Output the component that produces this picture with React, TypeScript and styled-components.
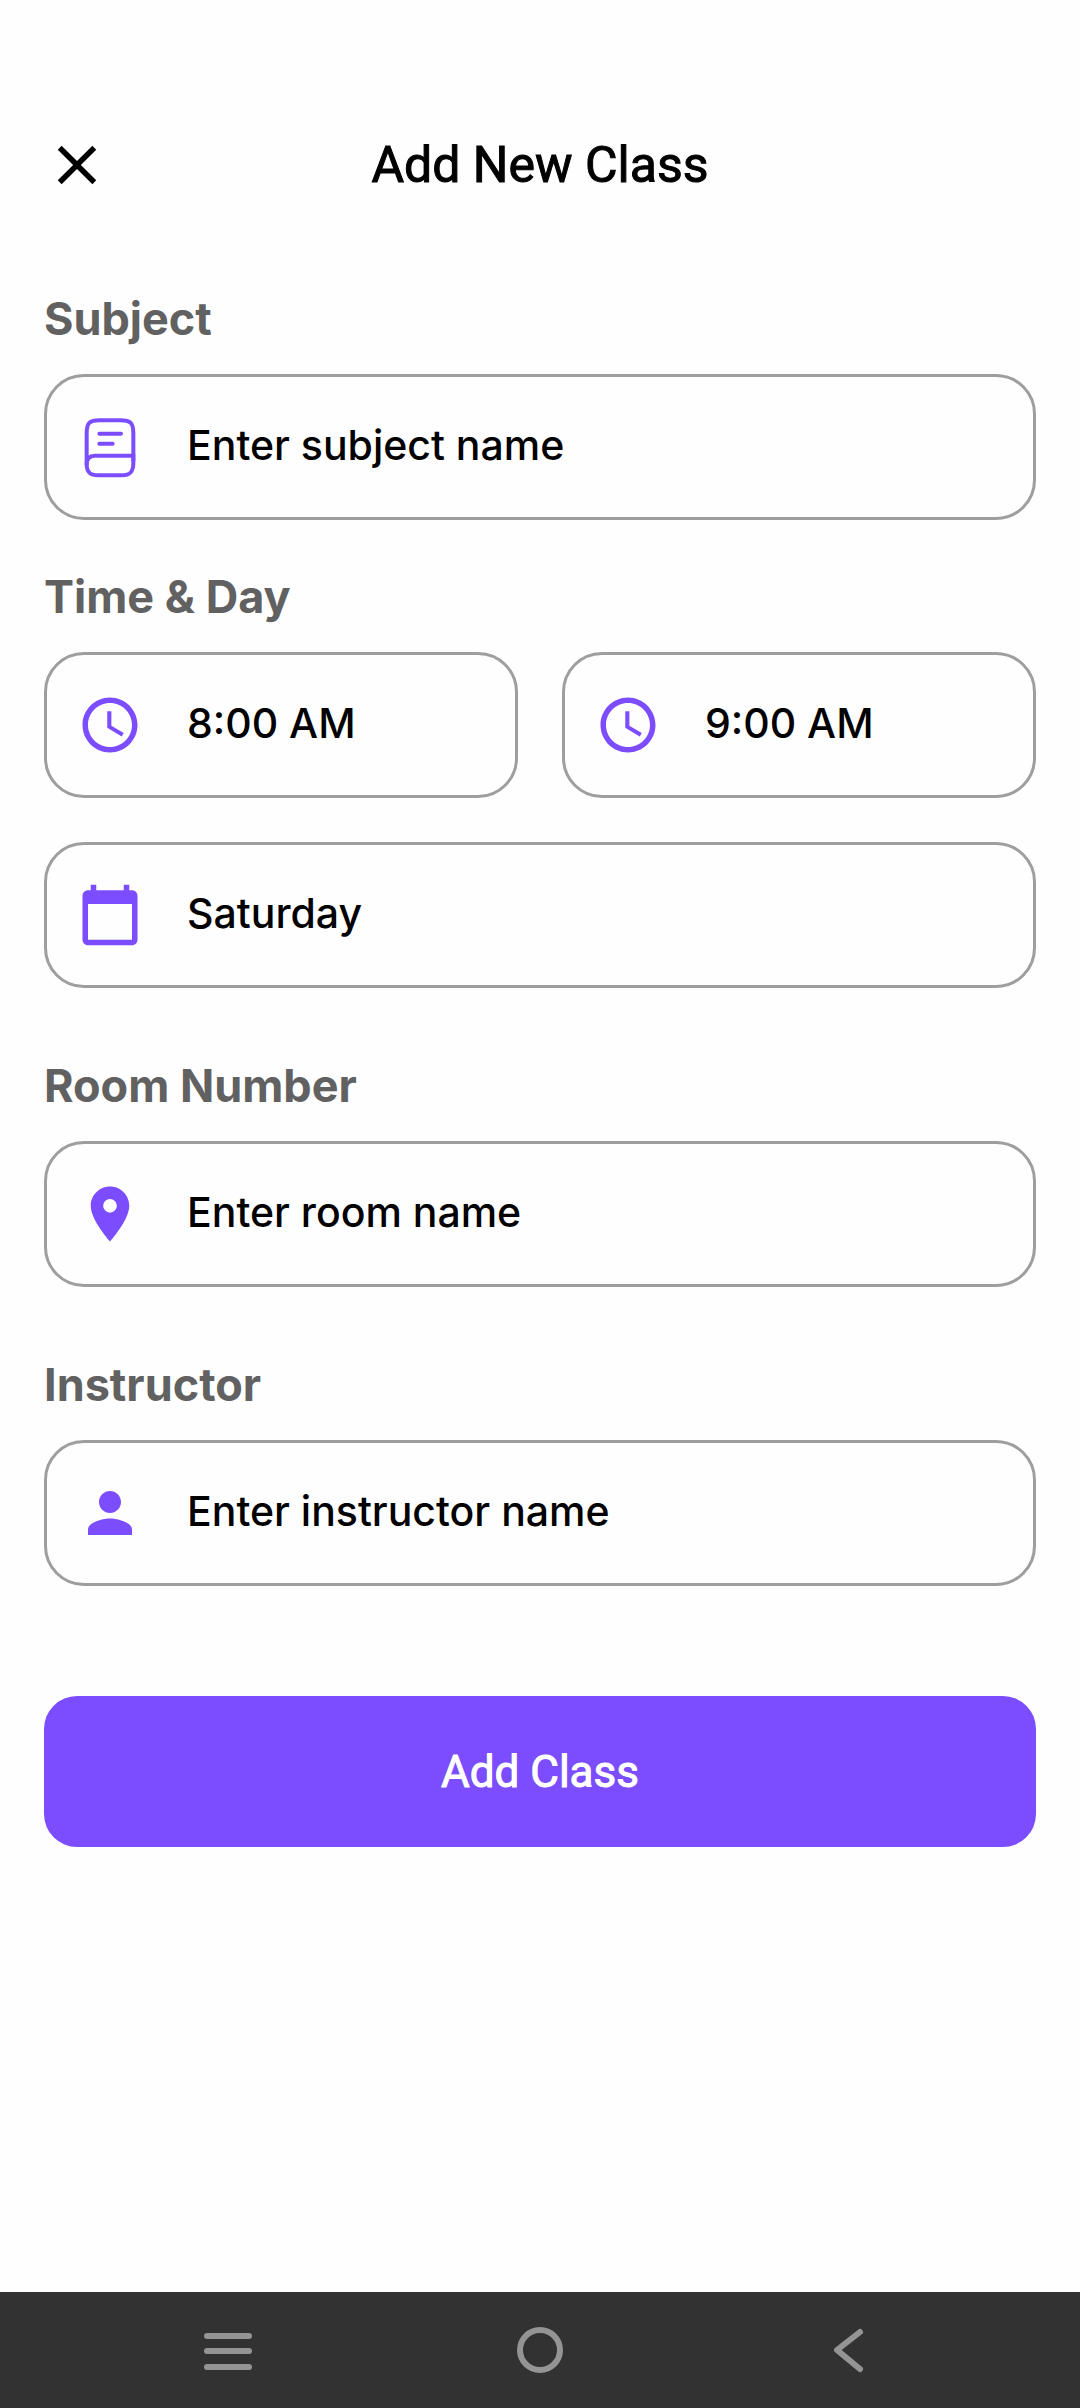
import React from "react";
import styled, { createGlobalStyle } from "styled-components";
import { MdAccessTime, MdCalendarToday, MdClose, MdLocationOn, MdPerson } from "react-icons/md";

const accent = "#7c4dff";

const GlobalStyle = createGlobalStyle`
  *, *::before, *::after { box-sizing: border-box; }
  body { margin: 0; background: #fefefe; }
  button, input, select { font: inherit; color: inherit; }
`;

const Screen = styled.div`
  display: flex;
  flex-direction: column;
  min-height: 100vh;
  padding-top: 88px;
  color: #000;
  font-family: Inter, "Noto Sans", sans-serif;
`;

const Header = styled.header`
  display: grid;
  grid-template-columns: 66px 1fr 66px;
  align-items: center;
  height: 154px;
  padding: 0 44px;
`;

const IconButton = styled.button`
  display: flex;
  align-items: center;
  justify-content: center;
  padding: 0;
  border: 0;
  background: none;
  cursor: pointer;
`;

const Title = styled.h1`
  margin: 0;
  text-align: center;
  font: 400 50px/66px Roboto, sans-serif;
  -webkit-text-stroke: 1px currentColor;
`;

const Form = styled.form`
  display: flex;
  flex-direction: column;
  gap: 65px;
  padding: 44px;
`;

const Group = styled.div`
  display: flex;
  flex-direction: column;
  gap: 44px;
`;

const Section = styled.section`
  display: flex;
  flex-direction: column;
  gap: 22px;
`;

const Label = styled.label`
  color: #616161;
  font-size: 45px;
  font-weight: 700;
  line-height: 66px;
`;

const Row = styled.div`
  display: grid;
  grid-template-columns: repeat(2, minmax(0, 1fr));
  gap: 44px;
`;

const Field = styled.div`
  display: flex;
  align-items: center;
  gap: 44px;
  height: 146px;
  padding: 0 30px;
  border: 3px solid #9e9e9e;
  border-radius: 40px;

  svg {
    flex: none;
    color: ${accent};
  }
`;

const controlStyle = `
  flex: 1;
  min-width: 0;
  height: 66px;
  padding: 0 0 4px;
  border: 0;
  outline: 0;
  background: none;
  font-size: 41px;
  font-weight: 500;
`;

const TextInput = styled.input`
  ${controlStyle}
  &::placeholder { color: #000; opacity: 1; }
`;

const Select = styled.select`
  ${controlStyle}
  appearance: none;
`;

const SubmitButton = styled.button`
  height: 151px;
  margin-top: 45px;
  border: 0;
  border-radius: 33px;
  background: ${accent};
  color: #fff;
  font: 400 44px/66px Roboto, sans-serif;
  -webkit-text-stroke: 1px currentColor;
  cursor: pointer;
`;

const NavBar = styled.nav`
  display: grid;
  grid-template-columns: repeat(3, 1fr);
  height: 116px;
  margin-top: auto;
  padding: 0 72px;
  background: #323232;
  color: #949494;
`;

const BookIcon = () => (
  <svg width="66" height="66" viewBox="0 0 198 198" fill="none" stroke="currentColor" strokeWidth="12" strokeLinecap="round" aria-hidden="true">
    <path d="M29 151V58C29 27 37 19 68 19H130C161 19 169 27 169 58V140" />
    <path d="M29 151C29 135 37 125 53 125H169V148C169 174 159 184 135 184H63C39 184 29 174 29 151Z" />
    <path d="M67 59H132M67 89H107" />
  </svg>
);

const MenuIcon = () => (
  <svg width="60" height="60" viewBox="0 0 60 60" fill="none" stroke="currentColor" strokeWidth="6" strokeLinecap="round" aria-hidden="true">
    <path d="M9 16H51M9 31H51M9 47H51" />
  </svg>
);

const HomeIcon = () => (
  <svg width="60" height="60" viewBox="0 0 60 60" fill="none" stroke="currentColor" strokeWidth="6" aria-hidden="true">
    <circle cx="30" cy="30" r="20" />
  </svg>
);

const BackIcon = () => (
  <svg width="60" height="60" viewBox="0 0 60 60" fill="none" stroke="currentColor" strokeWidth="6" strokeLinecap="round" strokeLinejoin="round" aria-hidden="true">
    <path d="M38 12L15 30L38 49" />
  </svg>
);

const days = ["Saturday", "Sunday", "Monday", "Tuesday", "Wednesday", "Thursday", "Friday"];

export default function App() {
  return (
    <Screen>
      <GlobalStyle />
      <Header>
        <IconButton type="button" aria-label="Close">
          <MdClose size={66} />
        </IconButton>
        <Title>Add New Class</Title>
      </Header>

      <Form onSubmit={(event) => event.preventDefault()}>
        <Group>
          <Section>
            <Label htmlFor="subject">Subject</Label>
            <Field>
              <BookIcon />
              <TextInput id="subject" placeholder="Enter subject name" />
            </Field>
          </Section>
          <Section>
            <Label htmlFor="start">Time &amp; Day</Label>
            <Group>
              <Row>
                <Field>
                  <MdAccessTime size={66} />
                  <TextInput id="start" defaultValue="8:00 AM" />
                </Field>
                <Field>
                  <MdAccessTime size={66} />
                  <TextInput aria-label="End time" defaultValue="9:00 AM" />
                </Field>
              </Row>
              <Field>
                <MdCalendarToday size={66} />
                <Select aria-label="Day" defaultValue="Saturday">
                  {days.map((day) => (
                    <option key={day}>{day}</option>
                  ))}
                </Select>
              </Field>
            </Group>
          </Section>
        </Group>
        <Section>
          <Label htmlFor="room">Room Number</Label>
          <Field>
            <MdLocationOn size={66} />
            <TextInput id="room" placeholder="Enter room name" />
          </Field>
        </Section>
        <Section>
          <Label htmlFor="instructor">Instructor</Label>
          <Field>
            <MdPerson size={66} />
            <TextInput id="instructor" placeholder="Enter instructor name" />
          </Field>
        </Section>
        <SubmitButton type="submit">Add Class</SubmitButton>
      </Form>

      <NavBar aria-label="System">
        <IconButton type="button" aria-label="Recent apps"><MenuIcon /></IconButton>
        <IconButton type="button" aria-label="Home"><HomeIcon /></IconButton>
        <IconButton type="button" aria-label="Back"><BackIcon /></IconButton>
      </NavBar>
    </Screen>
  );
}
